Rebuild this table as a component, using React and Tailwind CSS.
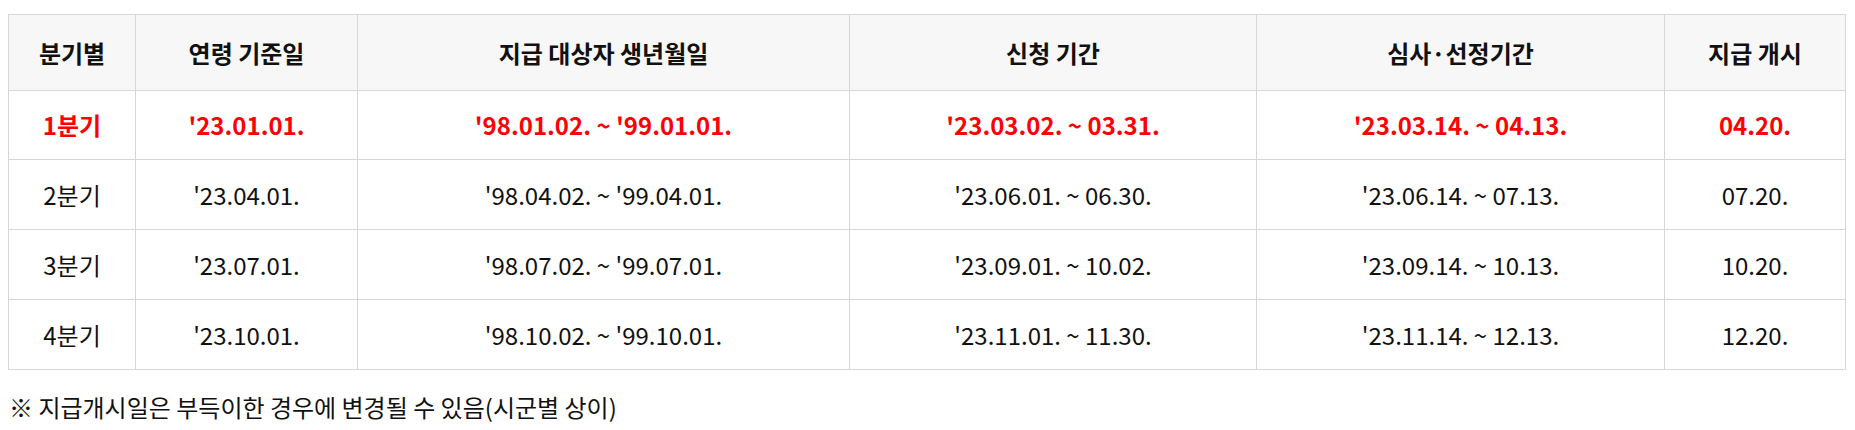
export default function App() {
  const head = ["분기별", "연령 기준일", "지급 대상자 생년월일", "신청 기간", "심사·선정기간", "지급 개시"];
  const widths = ["w-[127px]", "w-[222px]", "w-[492px]", "w-[407px]", "w-[408px]", "w-[181px]"];
  const rows = [
    ["1분기", "'23.01.01.", "'98.01.02. ~ '99.01.01.", "'23.03.02. ~ 03.31.", "'23.03.14. ~ 04.13.", "04.20."],
    ["2분기", "'23.04.01.", "'98.04.02. ~ '99.04.01.", "'23.06.01. ~ 06.30.", "'23.06.14. ~ 07.13.", "07.20."],
    ["3분기", "'23.07.01.", "'98.07.02. ~ '99.07.01.", "'23.09.01. ~ 10.02.", "'23.09.14. ~ 10.13.", "10.20."],
    ["4분기", "'23.10.01.", "'98.10.02. ~ '99.10.01.", "'23.11.01. ~ 11.30.", "'23.11.14. ~ 12.13.", "12.20."],
  ];
  return (
    <div className="bg-white w-[1855px] h-[430px] pl-2 pt-[14px] font-['Noto_Sans_CJK_KR',sans-serif] text-[#111]">
      <table className="w-[1837px] border-collapse table-fixed text-[24px]">
        <colgroup>
          {widths.map((w, i) => (
            <col key={i} className={w} />
          ))}
        </colgroup>
        <thead>
          <tr className="h-[76px] bg-[#f7f7f7]">
            {head.map((h, i) => (
              <th key={i} className="border border-[#d7d7db] font-bold text-center p-0">
                {h}
              </th>
            ))}
          </tr>
        </thead>
        <tbody>
          {rows.map((r, ri) => (
            <tr key={ri} className={ri === 0 ? "h-[69px] text-[#ff0000] font-bold" : "h-[70px] font-normal"}>
              {r.map((c, ci) => (
                <td key={ci} className="border border-[#d7d7db] text-center p-0">
                  {c}
                </td>
              ))}
            </tr>
          ))}
        </tbody>
      </table>
      <p className="mt-[21px] text-[24px] leading-[32px] pl-[1px]">※ 지급개시일은 부득이한 경우에 변경될 수 있음(시군별 상이)</p>
    </div>
  );
}
